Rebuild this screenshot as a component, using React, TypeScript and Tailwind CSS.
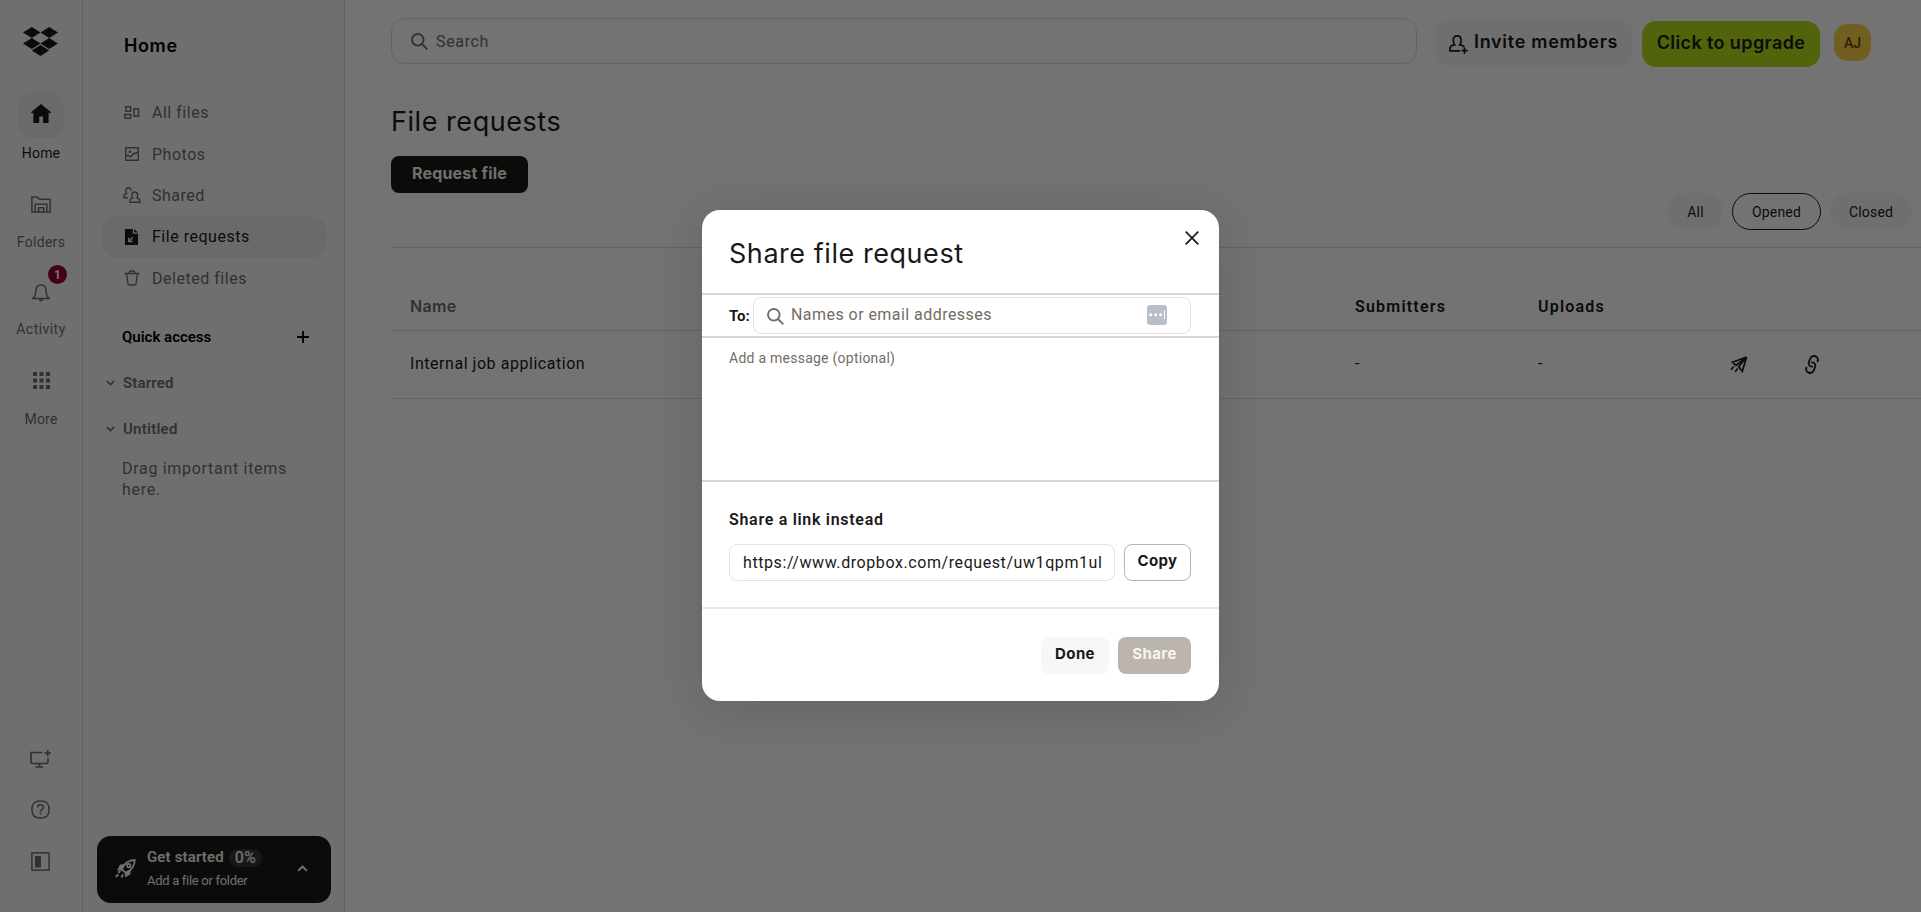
import React from "react";

type IconProps = { className?: string };

const stroke = {
  fill: "none",
  stroke: "currentColor",
  strokeWidth: 1.5,
} as const;

const Logo: React.FC = () => (
  <svg className="h-[29px] w-[35px]" viewBox="0 0 35 29" fill="currentColor">
    <path d="M8.8 0 17.5 5.5 8.8 11 0 5.5zM26.2 0 35 5.5 26.2 11 17.5 5.5zM8.8 11 17.5 16.5 8.8 22 0 16.5zM26.2 11 35 16.5 26.2 22 17.5 16.5zM17.5 18 26.2 23.5 17.5 29 8.8 23.5z" />
  </svg>
);

const HomeIcon: React.FC = () => (
  <svg className="mb-[3px] h-[19px] w-5" viewBox="0 0 20 19" fill="currentColor">
    <path d="M10 0 20 8.3 19 9.6 17.6 8.6V19H12v-6.5H8.2V19H2.4V8.6L1 9.6 0 8.3z" />
  </svg>
);

const FoldersIcon: React.FC = () => (
  <svg className="h-[17px] w-5" viewBox="0 0 20 17" {...stroke}>
    <path d="M.9 16V1h5.6l1.8 2.2h10.8V16z" />
    <path d="M4.2 16V8.2h11.6V16M7.6 16v-4.3h5V16" />
  </svg>
);

const BellIcon: React.FC = () => (
  <svg className="h-[18px] w-[18px]" viewBox="0 0 18 18" {...stroke}>
    <path d="M1 14.4c2.4-2 2.8-3.8 2.9-7.6C4 2.7 5.8.9 9 .9s5 1.8 5.1 5.9c.1 3.8.5 5.6 2.9 7.6z" />
    <path d="M7 15.2c0 1.4.8 2 2 2s2-.6 2-2z" fill="currentColor" stroke="none" />
  </svg>
);

const GridIcon: React.FC = () => (
  <svg className="h-[17px] w-[17px]" viewBox="0 0 17 17" fill="currentColor">
    {[0, 6.5, 13].map((y) =>
      [0, 6.5, 13].map((x) => <rect key={`${x}-${y}`} x={x} y={y} width="4" height="4" />)
    )}
  </svg>
);

const MonitorIcon: React.FC = () => (
  <svg className="h-[18px] w-[21px]" viewBox="0 0 21 18" {...stroke} strokeWidth={1.7}>
    <path d="M12.5 2.5H1v9.2c0 1 .7 1.8 1.8 1.8h13.4c1 0 1.8-.8 1.8-1.8V8M9.5 13.5V17M5.5 17H13" />
    <path d="M17.7 0v6.2M14.6 3.1h6.2" />
  </svg>
);

const HelpIcon: React.FC = () => (
  <svg className="h-[19px] w-[19px]" viewBox="0 0 19 19" {...stroke}>
    <path d="M9.5.9c6.2 0 8.6 2.4 8.6 8.6s-2.4 8.6-8.6 8.6S.9 15.700.9 9.500 3.300.9 9.500.9z" />
    <path d="M6.7 7.500c0-1.700 1-2.700 2.800-2.700s2.900 1 2.900 2.400c0 2.200-2.900 1.900-2.900 4.500" />
    <path d="M9.5 12.8v1.7" />
  </svg>
);

const PanelIcon: React.FC = () => (
  <svg className="h-[19px] w-[19px]" viewBox="0 0 19 19" {...stroke}>
    <rect x=".9" y=".9" width="17.2" height="17.2" />
    <path d="M4 4h6v11.500H4z" fill="currentColor" stroke="none" />
  </svg>
);

const AllFilesIcon: React.FC = () => (
  <svg className="h-[13px] w-4" viewBox="0 0 16 13" {...stroke}>
    <path d="M1.8.7h4.800v4.600H1.800zM.9 8.400h5.700v3.900H.9zM10 2.700h4.500v7.600H10z" />
  </svg>
);

const PhotosIcon: React.FC = () => (
  <svg className="h-3.5 w-3.5" viewBox="0 0 14 14" {...stroke}>
    <rect x=".7" y=".7" width="12.6" height="12.6" />
    <path d="M1 9.200c1.500-1.200 2.200-1.200 3.300 0 .8.900 1.500.7 2.500-.6 1.800-2.300 3-3 6.200-3" />
    <circle cx="4.800" cy="4.800" r="1.300" fill="currentColor" stroke="none" />
  </svg>
);

const SharedIcon: React.FC = () => (
  <svg className="h-4 w-[18px]" viewBox="0 0 18 16" {...stroke} strokeWidth={1.4}>
    <path d="M5 10.800H.8C.8 8.200 1.600 7 3.500 6.500 2.800 5.800 2.700 5 2.700 3.800 2.700 1.700 3.700.7 5.400.7s2.600 1 2.600 3" />
    <path d="M6.800 15.200c0-2.600.9-3.900 3-4.300-.7-.7-.9-1.600-.9-2.700 0-2.100 1-3.200 2.900-3.200s2.900 1.100 2.900 3.200c0 1.100-.2 2-.9 2.700 2.200.4 3.300 1.700 3.300 4.300z" />
  </svg>
);

const FileRequestIcon: React.FC = () => (
  <svg className="h-4 w-[13px]" viewBox="0 0 13 16">
    <path d="M0 0h7.800v4.700H13V16H0zM9.200 0 13 3.500H9.200z" fill="currentColor" />
    <path d="M7.800 8.300 3.900 12.200M3.700 8.600v3.900h4" fill="none" stroke="#ececf2" strokeWidth="1.3" />
  </svg>
);

const TrashIcon: React.FC = () => (
  <svg className="h-4 w-4" viewBox="0 0 16 16" {...stroke} strokeWidth={1.4}>
    <path d="M.5 3.500h15M5 3.500c.1-1.900.8-2.700 3-2.700s2.900.8 3 2.700M2.600 3.500l1.200 9.700c.2 1.400.7 1.800 2 1.800h4.400c1.300 0 1.800-.4 2-1.800l1.200-9.700" />
  </svg>
);

const SearchIcon: React.FC = () => (
  <svg className="h-[17px] w-[17px]" viewBox="0 0 17 17" {...stroke} strokeWidth={1.9}>
    <circle cx="6.8" cy="6.8" r="5.8" />
    <path d="m11 11 5.3 5.3" />
  </svg>
);

const ChevronIcon: React.FC<IconProps> = ({ className = "" }) => (
  <svg className={className} viewBox="0 0 10 6" {...stroke} strokeWidth={1.8}>
    <path d="m1 .8 4 4 4-4" />
  </svg>
);

const RocketIcon: React.FC = () => (
  <svg className="h-5 w-[21px]" viewBox="0 0 21 20" {...stroke} strokeWidth={1.8}>
    <path d="M6.800 10.500C9 4.500 13 1.200 19.700 1c0 6.500-3.500 10.500-9 12.700z" />
    <path d="M9 6 5.500 6.600 3.500 10.500l3.300.3M14.800 11.500l-.3 3.300-3.600 2.200-.4-3.200" fill="currentColor" />
    <circle cx="13.800" cy="6.600" r="1.700" />
    <path d="m5.300 12-2.100 1.700M3.300 15.500.7 18M8 15.500 6.500 18.500" strokeWidth="2" />
  </svg>
);

const InviteIcon: React.FC = () => (
  <svg className="h-[19px] w-[19px]" viewBox="0 0 19 19" {...stroke} strokeWidth={1.7}>
    <path d="M11 15.800H1V14c0-2.500 1.400-3.900 4.600-4.200C4.700 8.700 4.300 7.200 4.300 5.200 4.300 2.300 5.600.9 8.200.9s3.900 1.400 3.900 4.300c0 2-.4 3.500-1.300 4.600 2.200.2 3.800 1 4.300 2.400" />
    <path d="M15.500 12.500v6.300M12.300 15.600h6.400" />
  </svg>
);

const SendIcon: React.FC = () => (
  <svg className="h-[17px] w-[18px]" viewBox="0 0 18 17" {...stroke} strokeWidth={1.7}>
    <path d="M16.600 1 2.500 6.300 6 9.300zM16.600 1 8.700 10.800l3.600 4.600zM3.800 10.500 1 13.700M7.700 12.500 5.200 15.700" />
  </svg>
);

const LinkIcon: React.FC = () => (
  <svg className="h-[19px] w-3.5" viewBox="0 0 14 19" {...stroke} strokeWidth={1.8}>
    <path d="M7.800 11.500C4 12 3 9 4.200 6.200L5.200 3.600C6.500.8 9 .5 11 1.600 13.200 3 13.200 5 12.400 7" />
    <path d="M6.200 7.500C10 7 11 10 9.800 12.800L8.800 15.400C7.500 18.200 5 18.500 3 17.400.8 16 .8 14 1.600 12" />
  </svg>
);

const navItems = [
  { label: "All files", icon: <AllFilesIcon /> },
  { label: "Photos", icon: <PhotosIcon /> },
  { label: "Shared", icon: <SharedIcon /> },
  { label: "File requests", icon: <FileRequestIcon />, active: true },
  { label: "Deleted files", icon: <TrashIcon /> },
];

const Rail: React.FC = () => (
  <nav className="flex w-[83px] shrink-0 flex-col items-center border-r border-[#d9d7d4] bg-[#f7f6f5] pt-[27px] text-sm leading-4 text-[#736c64]">
    <div className="pr-px text-[#1a1918]">
      <Logo />
    </div>
    <div className="mt-9 flex size-[46px] items-center justify-center rounded-[14px] bg-[#ececf2] text-[#1a1918]">
      <HomeIcon />
    </div>
    <span className="mt-[7px] tracking-[0.15px] text-[#1a1918]">Home</span>
    <div className="mt-[35px]">
      <FoldersIcon />
    </div>
    <span className="mt-[21px] tracking-[0.3px]">Folders</span>
    <div className="relative mt-[34px]">
      <BellIcon />
      <span className="absolute -top-[19px] left-4 flex size-[19px] items-center justify-center rounded-full bg-[#9b0032] text-xs font-bold text-white">
        1
      </span>
    </div>
    <span className="mt-[19px] tracking-[0.45px]">Activity</span>
    <div className="mt-[35px]">
      <GridIcon />
    </div>
    <span className="mt-[22px] tracking-[0.2px]">More</span>
    <div className="mt-auto mb-[41px] flex flex-col items-center pr-px">
      <MonitorIcon />
      <div className="mt-8">
        <HelpIcon />
      </div>
      <div className="mt-[33px]">
        <PanelIcon />
      </div>
    </div>
  </nav>
);

const Sidebar: React.FC = () => (
  <aside className="flex w-[262px] shrink-0 flex-col border-r border-[#d9d7d4] bg-[#f7f6f5] pt-[35px] text-[#736c64]">
    <h2 className="pl-[41px] font-['Inter',sans-serif] text-[18px] leading-[22px] font-semibold tracking-[0.6px] text-black">
      Home
    </h2>
    <ul className="mt-[35px] ml-[18px] w-[226px]">
      {navItems.map((item) => (
        <li
          key={item.label}
          className={`flex h-[41.4px] items-center rounded-2xl pl-[20px] ${
            item.active ? "bg-[#ececf2] text-[#1a1918]" : ""
          }`}
        >
          <span className="flex w-[21px] justify-center">{item.icon}</span>
          <span className="ml-2.5 pt-px text-base tracking-[0.52px]">{item.label}</span>
        </li>
      ))}
    </ul>
    <div className="mt-7 flex h-5 items-center justify-between pr-[35px] pl-[39px] text-black">
      <span className="text-[15px] font-semibold">Quick access</span>
      <svg className="size-3" viewBox="0 0 12 12" {...stroke} strokeWidth={1.8}>
        <path d="M6 0v12M0 6h12" />
      </svg>
    </div>
    <div className="mt-[26px] flex h-5 items-center pl-[23px] text-[15px] font-semibold tracking-[0.15px]">
      <ChevronIcon className="mr-2 h-[6px] w-[9px]" />
      Starred
    </div>
    <div className="mt-[26px] flex h-5 items-center pl-[23px] text-[15px] font-semibold tracking-[0.25px]">
      <ChevronIcon className="mr-2 h-[6px] w-[9px]" />
      Untitled
    </div>
    <p className="mt-[19px] pr-10 pl-[39px] text-base leading-[21px] tracking-[0.7px]">
      Drag important items here.
    </p>
    <div className="mt-auto mb-[9px] ml-3.5 flex h-[67px] w-[234px] items-center rounded-[14px] bg-[#1a1918] pb-0.5 pl-[18px] text-[#f7f5f2]">
      <RocketIcon />
      <div className="ml-[11px]">
        <div className="flex h-[18px] items-center text-[15px] font-semibold tracking-[0.15px]">
          Get started
          <span className="ml-[5px] rounded-full bg-[#363534] px-[6px] text-base leading-[18px] font-medium">0%</span>
        </div>
        <div className="mt-1.5 text-[13px] leading-4 tracking-[-0.3px]">Add a file or folder</div>
      </div>
      <ChevronIcon className="mr-[23px] ml-auto h-[7px] w-[11px] rotate-180" />
    </div>
  </aside>
);

const TopBar: React.FC = () => (
  <header className="flex pt-[18px] font-['Inter',sans-serif] text-[#1a1918]">
    <div className="flex h-[46px] w-[1026px] items-center rounded-[14px] border border-[#dedcda] pl-[19px] font-['Roboto',sans-serif] text-[#736c64]">
      <SearchIcon />
      <span className="ml-2 pt-0.5 text-base tracking-[0.65px]">Search</span>
    </div>
    <button className="mt-0.5 ml-[18px] flex h-[46px] w-[198px] items-center rounded-[14px] bg-[#f7f5f5] pl-3.5 text-[18px] font-semibold">
      <span className="mt-0.5">
        <InviteIcon />
      </span>
      <span className="-mt-1 ml-[6px] tracking-[0.7px] whitespace-nowrap">Invite members</span>
    </button>
    <button className="mt-[3px] ml-[9px] h-[46px] w-[178px] rounded-[14px] bg-[#b4dc19] pb-[3px] text-[18px] font-semibold tracking-[0.4px] whitespace-nowrap">
      Click to upgrade
    </button>
    <div className="mt-1.5 ml-3.5 flex size-[37px] items-center justify-center rounded-[14px] bg-[#fad24b] font-['Roboto',sans-serif] text-sm font-medium text-[#684505]">
      AJ
    </div>
  </header>
);

const filters = [
  { label: "All", className: "w-[55px] bg-[#f7f5f5]" },
  { label: "Opened", className: "w-[89px] border border-[#1a1918]" },
  { label: "Closed", className: "w-[82px] bg-[#f7f5f5]" },
];

const FileRequests: React.FC = () => (
  <main className="min-w-0 flex-1 overflow-hidden bg-white pl-[46px] text-[#1a1918]">
    <TopBar />
    <h1 className="mt-[38px] font-['Inter',sans-serif] text-[27px] leading-[34px] tracking-[0.55px]">
      File requests
    </h1>
    <button className="mt-[17px] flex h-[37px] w-[137px] justify-center rounded-lg bg-[#1a1918] pt-[5px] font-['Inter',sans-serif] text-base font-bold tracking-[0.2px] text-[#f7f5f2]">
      Request file
    </button>
    <div className="flex justify-end gap-[9px] pr-[9px] pb-[17px]">
      {filters.map((f) => (
        <button key={f.label} className={`h-[37px] rounded-full text-sm tracking-[0.2px] ${f.className}`}>
          {f.label}
        </button>
      ))}
    </div>
    <div className="grid h-[84px] grid-cols-[964px_183px_1fr] border-y border-[#dedcda] pt-[48px] text-base leading-[22px] font-semibold">
      <span className="-mt-px pl-[19px] font-['Inter',sans-serif] tracking-[0.3px] text-[#736c64]">Name</span>
      <span className="tracking-[1.2px]">Submitters</span>
      <span className="tracking-[1.2px]">Uploads</span>
    </div>
    <div className="grid h-[68px] grid-cols-[964px_183px_192px_75px_1fr] items-center border-b border-[#dedcda] pb-px text-base">
      <span className="pl-[19px] tracking-[0.54px]">Internal job application</span>
      <span>-</span>
      <span>-</span>
      <SendIcon />
      <LinkIcon />
    </div>
  </main>
);

const ShareModal: React.FC = () => (
  <div
    role="dialog"
    className="flex h-[491px] w-[517px] flex-col overflow-hidden rounded-[18px] bg-white text-[#1a1918] shadow-[0_8px_56px_rgba(0,0,0,0.14)]"
  >
    <div className="flex h-[83px] justify-between pt-[21px] pr-5 pl-[27px]">
      <h2 className="pt-1.5 font-['Inter',sans-serif] text-[27px] leading-[34px] tracking-[0.55px]">
        Share file request
      </h2>
      <svg className="h-3.5 w-3.5" viewBox="0 0 14 14" {...stroke} strokeWidth={1.7}>
        <path d="m.7.7 12.600 12.600M13.300.7.7 13.300" />
      </svg>
    </div>
    <div className="flex h-[45px] items-center border-y-2 border-[#d9d7ce] pr-7 pl-[27px]">
      <span className="w-6 pt-px text-[15px] font-bold whitespace-nowrap">To:</span>
      <div className="-mt-px flex h-[37px] flex-1 items-center rounded-lg border border-[#e2e2e6] pl-[13px] text-[#736c64]">
        <span className="pt-0.5">
          <SearchIcon />
        </span>
        <span className="ml-[7px] pb-px text-base tracking-[0.45px]">Names or email addresses</span>
        <svg className="mr-[23px] mb-px ml-auto size-5" viewBox="0 0 20 20">
          <rect width="20" height="20" rx="3" fill="#b8bfcb" />
          <g fill="#fff">
            <circle cx="3.6" cy="9.7" r="1.5" />
            <circle cx="8.6" cy="9.7" r="1.5" />
            <circle cx="13.6" cy="9.7" r="1.5" />
            <path d="M17 5.500h1v8.500h-1z" />
          </g>
        </svg>
      </div>
    </div>
    <div className="h-[144px] border-b-2 border-[#d9d7ce] px-[27px] pt-[10px] text-sm leading-5 tracking-[0.25px] text-[#736c64]">
      Add a message (optional)
    </div>
    <div className="h-[127px] border-b-2 border-[#e8e8e8] pt-[26px] pr-7 pl-[27px]">
      <h3 className="text-base leading-6 font-semibold tracking-[0.7px]">Share a link instead</h3>
      <div className="mt-3 flex gap-[9px]">
        <div className="h-[37px] w-[386px] overflow-hidden rounded-lg border border-[#e2e2e2] px-[13px] text-base leading-9 tracking-[0.58px] whitespace-nowrap">
          https://www.dropbox.com/request/uw1qpm1ul
        </div>
        <button className="h-[37px] flex-1 rounded-lg border border-[#bbb5ae] pb-0.5 font-['Inter',sans-serif] text-[15px] font-bold tracking-[0.4px]">
          Copy
        </button>
      </div>
    </div>
    <div className="flex justify-end gap-[9px] pt-7 pr-7 font-['Inter',sans-serif] text-[15px] font-bold tracking-[0.4px]">
      <button className="h-[37px] w-[68px] rounded-lg bg-[#f7f7f8] pb-0.5">Done</button>
      <button className="h-[37px] w-[73px] rounded-lg bg-[#bbb5ae] pb-0.5 text-[#f7f5f2]">Share</button>
    </div>
  </div>
);

const App: React.FC = () => {
  return (
    <div className="relative flex h-[912px] w-[1921px] overflow-hidden font-['Roboto',sans-serif]">
      <Rail />
      <Sidebar />
      <FileRequests />

      {/* Backdrop + dialog */}
      <div className="absolute inset-0 flex items-start justify-center bg-black/55 pt-[210px]">
        <ShareModal />
      </div>
    </div>
  );
};

export default App;
